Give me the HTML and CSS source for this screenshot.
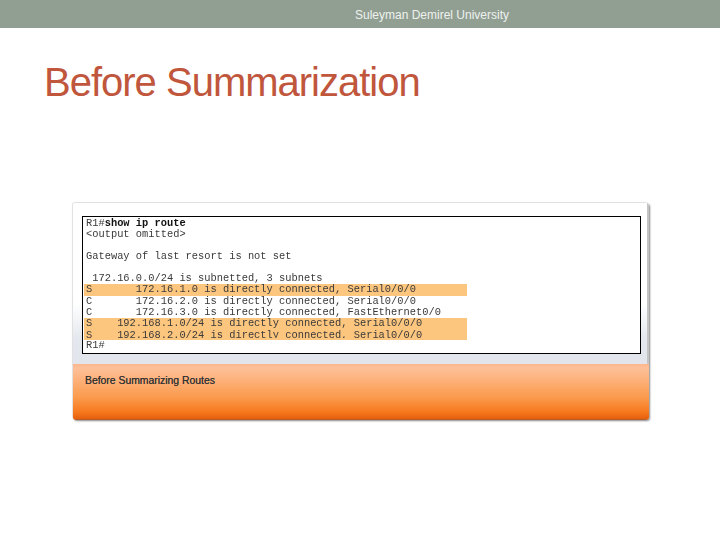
FILE: index.html
```html
<!DOCTYPE html>
<html lang="en">
<head>
<meta charset="utf-8">
<title>Before Summarization</title>
<link rel="stylesheet" href="styles.css">
</head>
<body>
<header class="topbar"><span class="org">Suleyman Demirel University</span></header>
<h1 class="title">Before Summarization</h1>
<section class="card">
  <div class="card-top">
    <div class="terminal">
      <div class="line"><span class="cmd">R1#<b>show ip route</b></span></div>
      <div class="line">&lt;output omitted&gt;</div>
      <div class="line"> </div>
      <div class="line">Gateway of last resort is not set</div>
      <div class="line"> </div>
      <div class="line"> 172.16.0.0/24 is subnetted, 3 subnets</div>
      <div class="line hl first">S       172.16.1.0 is directly connected, Serial0/0/0</div>
      <div class="line">C       172.16.2.0 is directly connected, Serial0/0/0</div>
      <div class="line">C       172.16.3.0 is directly connected, FastEthernet0/0</div>
      <div class="line hl first">S    192.168.1.0/24 is directly connected, Serial0/0/0</div>
      <div class="line hl"><span class="cut">S    192.168.2.0/24 is directly connected, Serial0/0/0</span></div>
      <div class="line">R1#</div>
    </div>
  </div>
  <div class="card-bottom">Before Summarizing Routes</div>
</section>
</body>
</html>
```
FILE: styles.css
```css
html, body { margin: 0; padding: 0; background: #fff; }
body { width: 720px; height: 540px; overflow: hidden; font-family: "Liberation Sans", Arial, sans-serif; }
.topbar { height: 28px; background: #919f93; display: flex; align-items: center; justify-content: center; padding-left: 144px; padding-top: 2px; box-sizing: border-box; }
.org { font-size: 12px; color: #eef1ee; line-height: 26px; }
.title { margin: 32px 0 0 44px; font-size: 40px; line-height: 44px; font-weight: 400; color: #c0563c; letter-spacing: -1px; }
.card { margin: 99px 0 0 73px; width: 576px; height: 217px; display: flex; flex-direction: column; border-radius: 3px; box-shadow: 1px 1px 2px #8a8a8a, -1px -1px 1px #e4e4e4; overflow: hidden; }
.card-top { height: 161px; box-sizing: border-box; padding: 13px 6px 0 9px; background: linear-gradient(#fff 0, #fff 100px, #e4e8ee 135px, #e2e6ec 100%); border-right: 2px solid #c4c4c4; }
.terminal { height: 138px; box-sizing: border-box; border: 1.5px solid #000; background: #fff; padding: 1px 1px 0; font-family: "Liberation Mono", "Courier New", monospace; font-size: 10.38px; line-height: 11px; color: #3a3a3a; filter: blur(0.35px); }
.line { height: 11px; white-space: pre; padding-left: 2px; width: 381px; }
.line.hl { background: #fdc67e; }
.line.first { height: 11.5px; }
.cut { display: block; height: 9px; line-height: 12.5px; overflow: hidden; }
.cmd b { color: #111; }
.card-bottom { height: 56px; box-sizing: border-box; padding: 10px 0 0 12px; font-size: 10.4px; line-height: 14px; color: #333; text-shadow: 0 0 0.6px #444; background: linear-gradient(#fdb68c 0, #fdc09a 4px, #fdb078 30%, #fb9a4c 60%, #f77a1e 85%, #e8620e 97%, #a85a30 100%); }
```
